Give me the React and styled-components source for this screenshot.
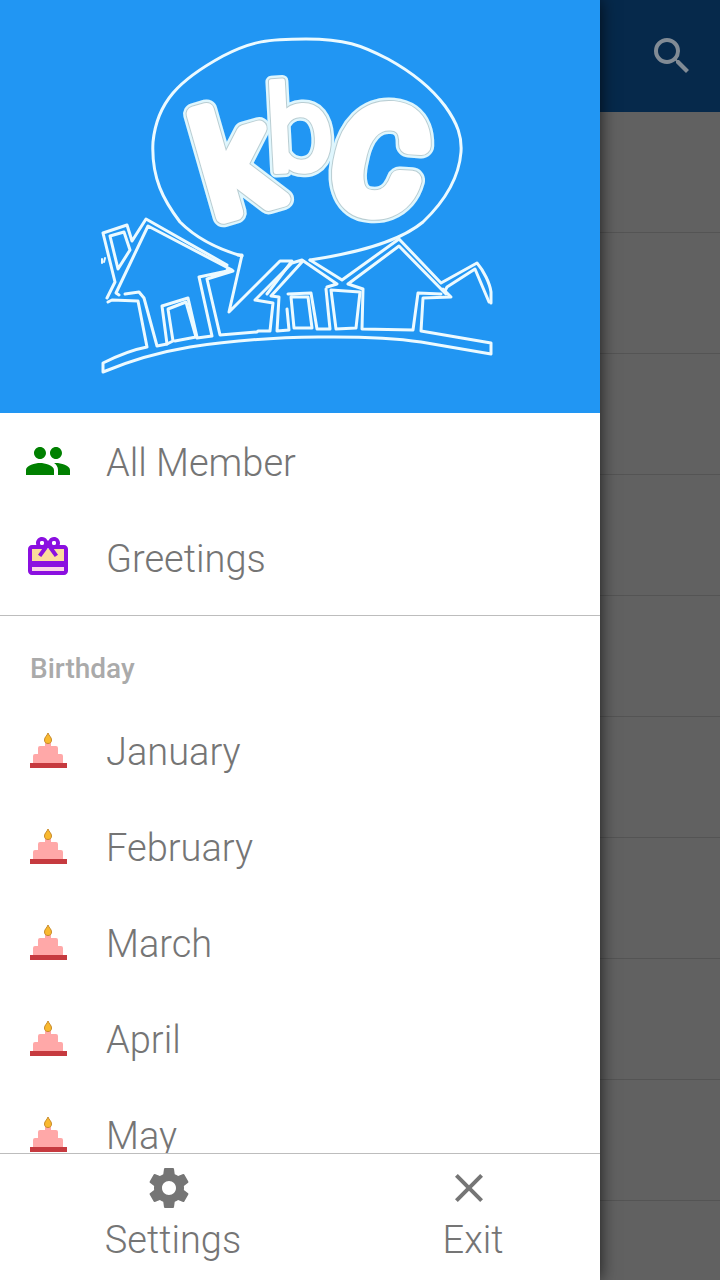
import React from "react";
import styled, { createGlobalStyle } from "styled-components";
import { MdClose, MdPeople, MdSearch } from "react-icons/md";

const GlobalStyle = createGlobalStyle`
  * { box-sizing: border-box; }
  body {
    margin: 0;
    background: #616161;
    font-family: Roboto, "Liberation Sans", sans-serif;
  }
`;

const Screen = styled.div`
  position: relative;
  height: 100vh;
  overflow: hidden;
`;

const AppBar = styled.header`
  display: flex;
  align-items: center;
  justify-content: flex-end;
  height: 112px;
  padding: 0 24px;
  background: #06294b;
`;

const SearchButton = styled.button`
  display: flex;
  padding: 0;
  border: 0;
  background: none;
  color: #818b95;
  font-size: 48px;
`;

const MemberList = styled.ul`
  margin: 0;
  padding: 0;
  list-style: none;
`;

const MemberRow = styled.li`
  height: 121px;
  border-bottom: 1px solid #545454;
`;

const Drawer = styled.aside`
  position: absolute;
  top: 0;
  bottom: 0;
  left: 0;
  width: calc(100% - 120px);
  display: flex;
  flex-direction: column;
  background: #fff;
  box-shadow: 0 0 16px rgba(0, 0, 0, 0.75);
`;

const Banner = styled.div`
  display: flex;
  justify-content: center;
  flex: none;
  padding: 31px 100px;
  background: #2196f3;

  svg {
    display: block;
    width: 100%;
    max-width: 400px;
  }
`;

const Menu = styled.nav`
  flex: 1;
  min-height: 0;
  overflow-y: auto;
  scrollbar-width: none;
`;

const Group = styled.div`
  padding-bottom: ${(p) => (p.$divided ? "10px" : "0")};
  border-bottom: ${(p) => (p.$divided ? "1px solid #bdbdbd" : "0")};
`;

const GroupTitle = styled.h2`
  margin: 0;
  padding: 33px 30px 13px;
  color: #aaa;
  font-size: 28px;
  font-weight: 500;
  line-height: 40px;
`;

const MenuItem = styled.a`
  display: flex;
  align-items: center;
  gap: 34px;
  height: 96px;
  padding: 0 24px;
  color: #757575;
  font-size: 38px;
  font-weight: 300;
  line-height: 48px;
  text-decoration: none;
`;

const ItemLabel = styled.span`
  padding-top: 4px;
`;

const ItemIcon = styled.span`
  display: flex;
  width: 48px;
  height: 48px;
  color: ${(p) => p.$color || "inherit"};
  font-size: 48px;
`;

const Footer = styled.footer`
  display: grid;
  grid-template-columns: 1fr 1fr;
  flex: none;
  border-top: 1px solid #bdbdbd;
`;

const FooterButton = styled.button`
  display: flex;
  flex-direction: column;
  align-items: center;
  gap: 4px;
  padding: 10px 0 16px 46px;
  border: 0;
  background: none;
  color: #757575;
  font-family: inherit;
  font-size: 38px;
  font-weight: 300;
  line-height: 48px;

  svg {
    width: 48px;
    height: 48px;
    margin-right: 8px;
  }
`;

const LogoLetter = styled.text`
  font-family: Roboto, sans-serif;
  font-weight: 400;
  font-size: ${(p) => p.$size}px;
  font-style: ${(p) => (p.$slanted ? "italic" : "normal")};
  stroke-linejoin: round;
  stroke-linecap: round;
`;

const letters = [
  { char: "k", x: 214, y: 219, turn: -16, size: 142, swell: 22 },
  { char: "b", x: 268, y: 172, turn: -3, size: 120, swell: 12 },
  { char: "C", x: 331, y: 206, turn: 4, size: 138, swell: 26, slanted: true },
];

const layers = [
  { stroke: "#dff6fd", inset: 0 },
  { stroke: "#b9cdd2", inset: 5 },
  { stroke: "#fff", inset: 7 },
];

function Logo() {
  return (
    <svg viewBox="100 31 400 351" role="img" aria-label="kbC">
      <g fill="none" stroke="#ecfaff" strokeWidth="3" strokeLinejoin="round" strokeLinecap="round">
        <path d="M242 256C214 248 195 237 180 222C164 201 151 178 153 142C157 102 179 80 223 56C252 41 268 39 306 39C345 39 361 45 388 59C417 75 433 90 445 106C458 124 462 137 461 152C459 178 446 200 423 222C405 237 370 251 310 260" />
        <path d="M238 255H242L229 312L280 261L292 261L267 294" />
        <path d="M108 302L112 300L138 301L147 347C131 350 115 357 103 363V372C134 359 160 352 190 347C270 334 375 335 421 342L491 354V343L421 331L423 298L451 297L443 289" />
        <path d="M107 298L115 282L103 233L127 225L132 241L146 219L227 265" />
        <path d="M119 295L116 293L148 226L232 270L199 277L212 336L197 338M227 270L233 271L207 279L220 335L257 332" />
        <path d="M125 294L139 292L144 298L157 346L167 344L173 341L168 309L186 302L196 337L175 341" />
        <path d="M167 344L162 306L188 298L197 337" />
        <path d="M118 269L110 236L124 232L130 250Z" />
        <path d="M102 259L102 263M105 258L104 262" strokeWidth="2" />
        <path d="M258 331L270 331L273 303L255 300L292 263L302 260L337 284L327 287M302 262L271 296L279 297L277 331L289 330L287 309" />
        <path d="M288 294L311 293L317 329L330 329L326 289M291 297H308L312 328H294Z" />
        <path d="M331 290L360 292L356 328L336 329ZM310 260L342 280L399 239L441 283L477 263C484 271 490 284 491 292V303" />
        <path d="M446 294L399 246L348 284L363 289L362 329L413 330L418 293L441 294M445 291L447 287L475 269L489 302" />
      </g>
      {letters.map((l) => (
        <g key={l.char} transform={`rotate(${l.turn} ${l.x} ${l.y})`}>
          {layers.map((layer) => (
            <LogoLetter
              key={layer.inset}
              x={l.x}
              y={l.y}
              $size={l.size}
              $slanted={l.slanted}
              fill="#fff"
              stroke={layer.stroke}
              strokeWidth={l.swell - layer.inset}
              aria-hidden={layer.inset !== 0}
            >
              {l.char}
            </LogoLetter>
          ))}
        </g>
      ))}
    </svg>
  );
}

function GiftIcon() {
  return (
    <svg viewBox="0 0 24 24" width="48" height="48" aria-hidden="true">
      <path fill="#fbdc9c" d="M4 8h16v7H4z" />
      <path fill="#fbd3e6" d="M4 17h16v2H4z" />
      <path
        fill="#8b0fe0"
        d="M20 6h-2.18c.11-.31.18-.65.18-1 0-1.66-1.34-3-3-3-1.05 0-1.96.54-2.5 1.35l-.5.67-.5-.68C10.96 2.54 10.05 2 9 2 7.34 2 6 3.34 6 5c0 .35.07.69.18 1H4c-1.11 0-1.99.89-1.99 2L2 19c0 1.11.89 2 2 2h16c1.11 0 2-.89 2-2V8c0-1.11-.89-2-2-2zm-5-2c.55 0 1 .45 1 1s-.45 1-1 1-1-.45-1-1 .45-1 1-1zM9 4c.55 0 1 .45 1 1s-.45 1-1 1-1-.45-1-1 .45-1 1-1zm11 15H4v-2h16v2zm0-5H4V8h5.080L7 10.830 8.620 12 11 8.760l1-1.360 1 1.360L15.380 12 17 10.830 14.920 8H20v6z"
      />
      <circle cx="9" cy="5" r="1" fill="#fff" />
      <circle cx="15" cy="5" r="1" fill="#fff" />
    </svg>
  );
}

function CakeIcon() {
  return (
    <svg viewBox="0 0 48 48" width="48" height="48" aria-hidden="true">
      <path fill="#ffa8a8" d="M21 16h6v4h5q2 0 2 2v6h3q2 0 2 2v8H9v-8q0-2 2-2h3v-6q0-2 2-2h5z" />
      <path fill="#f9b92f" stroke="#c78a2a" d="M24 7C23 10 20.500 11 20.500 14C20.500 16.500 22 17.500 24 17.500S27.500 16.500 27.500 14C27.500 11 25 10 24 7Z" />
      <path fill="#c63a3f" d="M6 37h37v5H6z" />
    </svg>
  );
}

function GearIcon() {
  return (
    <svg viewBox="0 0 24 24" fill="currentColor" aria-hidden="true">
      <path d="M19.430 12.980c.04-.32.07-.64.07-.98s-.03-.66-.07-.98l2.110-1.650c.19-.15.24-.42.12-.64l-2-3.460c-.12-.22-.39-.3-.61-.22l-2.490 1c-.52-.4-1.080-.73-1.690-.98l-.38-2.650C14.460 2.180 14.250 2 14 2h-4c-.25 0-.46.18-.49.42l-.38 2.650c-.61.25-1.170.59-1.690.98l-2.490-1c-.23-.09-.49 0-.61.22l-2 3.460c-.13.22-.07.49.12.64l2.110 1.650c-.04.32-.07.65-.07.98s.03.66.07.98l-2.110 1.650c-.19.15-.24.42-.12.64l2 3.460c.12.22.39.3.61.22l2.490-1c.52.4 1.080.73 1.690.98l.38 2.650c.03.24.24.42.49.42h4c.25 0 .46-.18.49-.42l.38-2.650c.61-.25 1.170-.59 1.690-.98l2.490 1c.23.09.49 0 .61-.22l2-3.460c.12-.22.07-.49-.12-.64l-2.110-1.650zM12 15.500c-1.930 0-3.500-1.570-3.500-3.500s1.570-3.500 3.500-3.500 3.500 1.570 3.500 3.500-1.570 3.500-3.500 3.500z" />
    </svg>
  );
}

const months = ["January", "February", "March", "April", "May"];
const memberRows = Array.from({ length: 10 }, (_, i) => i);

export default function App() {
  return (
    <Screen>
      <GlobalStyle />
      <AppBar>
        <SearchButton type="button" aria-label="Search">
          <MdSearch />
        </SearchButton>
      </AppBar>
      <MemberList>
        {memberRows.map((row) => (
          <MemberRow key={row} />
        ))}
      </MemberList>

      <Drawer>
        <Banner>
          <Logo />
        </Banner>
        <Menu>
          <Group $divided>
            <MenuItem href="#members">
              <ItemIcon $color="#008000">
                <MdPeople />
              </ItemIcon>
              <ItemLabel>All Member</ItemLabel>
            </MenuItem>
            <MenuItem href="#greetings">
              <ItemIcon>
                <GiftIcon />
              </ItemIcon>
              <ItemLabel>Greetings</ItemLabel>
            </MenuItem>
          </Group>
          <Group>
            <GroupTitle>Birthday</GroupTitle>
            {months.map((month) => (
              <MenuItem key={month} href={`#${month.toLowerCase()}`}>
                <ItemIcon>
                  <CakeIcon />
                </ItemIcon>
                <ItemLabel>{month}</ItemLabel>
              </MenuItem>
            ))}
          </Group>
        </Menu>
        <Footer>
          <FooterButton type="button">
            <GearIcon />
            Settings
          </FooterButton>
          <FooterButton type="button">
            <MdClose />
            Exit
          </FooterButton>
        </Footer>
      </Drawer>
    </Screen>
  );
}
